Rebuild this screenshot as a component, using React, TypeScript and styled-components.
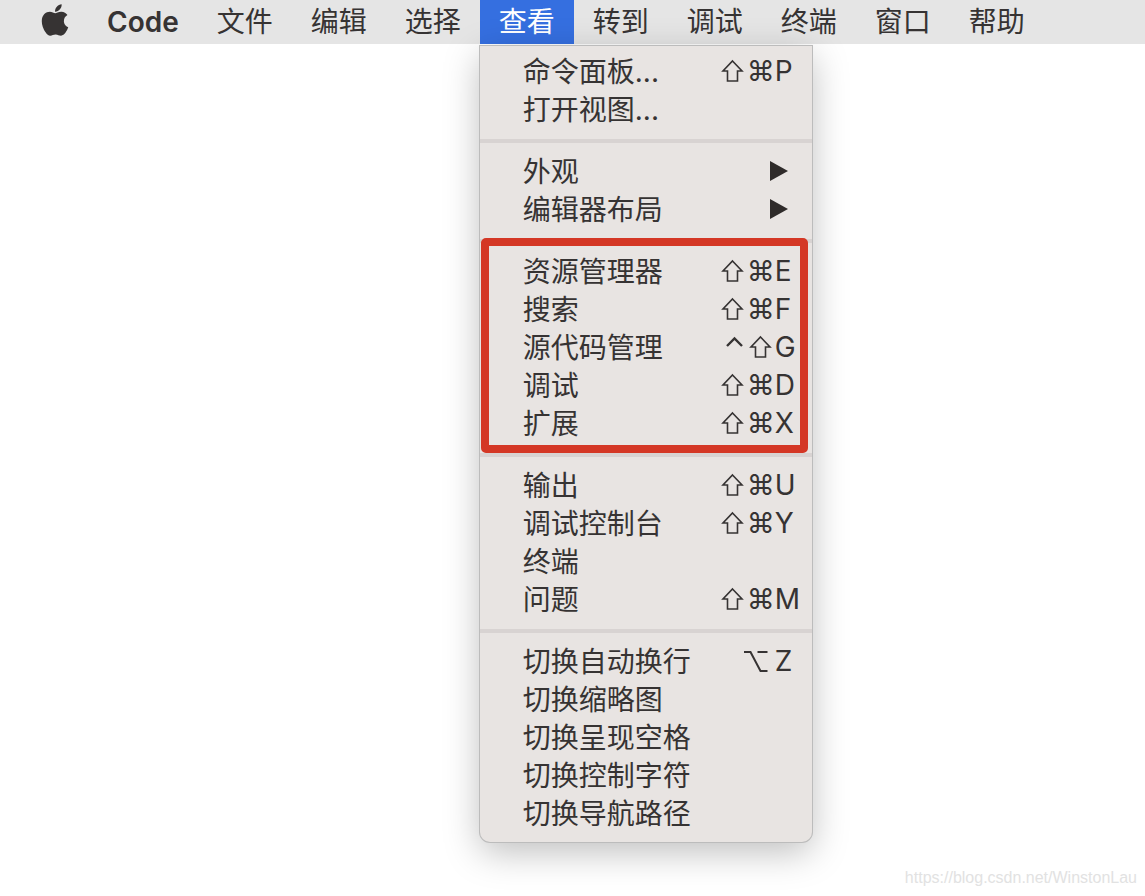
import React from 'react';
import styled, { createGlobalStyle } from 'styled-components';
import { FaApple } from 'react-icons/fa';

const GlobalStyle = createGlobalStyle`
  *, *::before, *::after { box-sizing: border-box; }
  body {
    margin: 0;
    background: #fff;
    color: #363333;
    font-family: Inter, "Noto Sans CJK SC", sans-serif;
    font-size: 28px;
  }
  button { font: inherit; color: inherit; border: 0; background: none; cursor: default; }
`;

const Page = styled.div`
  display: flex;
  flex-direction: column;
  min-height: 100vh;
`;

const MenuBar = styled.nav`
  display: flex;
  height: 44px;
  padding-left: 20px;
  background: #e5e5e5;
`;

const BarItem = styled.div`
  position: relative;
  display: flex;
`;

const BarButton = styled.button<{ $active?: boolean; $bold?: boolean }>`
  padding: 0 19px;
  line-height: 44px;
  white-space: nowrap;
  font-weight: ${p => (p.$bold ? 600 : 400)};
  color: ${p => (p.$active ? '#fff' : 'inherit')};
  background: ${p => (p.$active ? '#356fe0' : 'transparent')};
`;

const AppleButton = styled.button`
  display: flex;
  width: 68px;
  padding: 2px 0 0 2px;
  justify-content: center;
`;

const Dropdown = styled.div`
  position: absolute;
  top: 46px;
  left: 0;
  width: 332px;
  padding: 7px 0 9px;
  background: #e8e4e2;
  border-radius: 0 0 10px 10px;
  box-shadow: 0 0 0 1px #bcbcbc, 0 10px 36px rgba(0, 0, 0, 0.26);
`;

const Group = styled.div`
  position: relative;
`;

const Separator = styled.hr`
  height: 4px;
  margin: 10px 0;
  border: 0;
  background: #d8d3d2;
`;

const Row = styled.button`
  display: flex;
  width: 100%;
  height: 38px;
  padding: 0 11px 0 43px;
  align-items: center;
  justify-content: space-between;
  line-height: 38px;
  text-align: left;
  white-space: nowrap;
`;

const Keys = styled.span`
  display: flex;
  align-items: center;
  padding-bottom: 2px;
`;

const Key = styled.kbd`
  width: 28px;
  font-family: Inter, "DejaVu Sans", sans-serif;
  text-align: center;
`;

const KeyIcon = styled.svg`
  width: 28px;
  height: 28px;
  fill: none;
  stroke: currentColor;
`;

const Letter = styled(Key)<{ $spaced: boolean }>`
  width: 26px;
  margin-left: ${p => (p.$spaced ? '4px' : 0)};
  text-align: left;
`;

const Arrow = styled.svg`
  width: 18px;
  height: 20px;
  margin: 0 13px 2px 0;
  fill: #2f2b2a;
`;

const Highlight = styled.div`
  position: absolute;
  inset: -15px 4px -10px 1px;
  border: 8px solid #d43725;
  border-radius: 5px;
  pointer-events: none;
`;

const Watermark = styled.footer`
  margin-top: auto;
  padding: 0 8px 8px;
  text-align: right;
  font: 16px/20px "Liberation Sans", Arial, sans-serif;
  color: #e2e2e2;
`;

type Item = { label: string; keys?: string; submenu?: boolean };
type Section = { highlighted?: boolean; items: Item[] };

const sections: Section[] = [
  { items: [{ label: '命令面板...', keys: '⇧⌘P' }, { label: '打开视图...' }] },
  { items: [{ label: '外观', submenu: true }, { label: '编辑器布局', submenu: true }] },
  {
    highlighted: true,
    items: [
      { label: '资源管理器', keys: '⇧⌘E' },
      { label: '搜索', keys: '⇧⌘F' },
      { label: '源代码管理', keys: '⌃⇧G' },
      { label: '调试', keys: '⇧⌘D' },
      { label: '扩展', keys: '⇧⌘X' },
    ],
  },
  {
    items: [
      { label: '输出', keys: '⇧⌘U' },
      { label: '调试控制台', keys: '⇧⌘Y' },
      { label: '终端' },
      { label: '问题', keys: '⇧⌘M' },
    ],
  },
  {
    items: [
      { label: '切换自动换行', keys: '⌥Z' },
      { label: '切换缩略图' },
      { label: '切换呈现空格' },
      { label: '切换控制字符' },
      { label: '切换导航路径' },
    ],
  },
];

const barItems = ['文件', '编辑', '选择', '查看', '转到', '调试', '终端', '窗口', '帮助'];

const modifierIcons: Record<string, { name: string; path: string; weight: number }> = {
  '⇧': { name: 'Shift', path: 'M13.500 4 23 14H18.500V24H8.500V14H4Z', weight: 1.6 },
  '⌃': { name: 'Control', path: 'M8 13 15.500 5.500 23 13', weight: 2.4 },
  '⌥': { name: 'Option', path: 'M1 5H7.500L17.500 24H24.500M14.500 5H24.500', weight: 2 },
};

function Shortcut({ keys }: { keys: string }) {
  const modifiers = keys.slice(0, -1).split('');
  return (
    <Keys>
      {modifiers.map(k => {
        const icon = modifierIcons[k];
        return icon ? (
          <KeyIcon key={k} viewBox="0 0 28 28" role="img" aria-label={icon.name}>
            <path d={icon.path} strokeWidth={icon.weight} />
          </KeyIcon>
        ) : (
          <Key key={k}>{k}</Key>
        );
      })}
      <Letter $spaced={modifiers.includes('⌥')}>{keys.slice(-1)}</Letter>
    </Keys>
  );
}

function ViewMenu() {
  return (
    <Dropdown role="menu" aria-label="查看">
      {sections.map((section, i) => (
        <React.Fragment key={i}>
          {i > 0 && <Separator />}
          <Group role="group">
            {section.items.map(item => (
              <Row key={item.label} role="menuitem" type="button">
                <span>{item.label}</span>
                {item.keys && <Shortcut keys={item.keys} />}
                {item.submenu && (
                  <Arrow viewBox="0 0 18 20" aria-hidden="true"><path d="M0 0 18 10 0 20z" /></Arrow>
                )}
              </Row>
            ))}
            {section.highlighted && <Highlight />}
          </Group>
        </React.Fragment>
      ))}
    </Dropdown>
  );
}

export default function App() {
  return (
    <Page>
      <GlobalStyle />
      <MenuBar>
        <AppleButton type="button" aria-label="Apple"><FaApple size={36} /></AppleButton>
        <BarButton type="button" $bold>Code</BarButton>
        {barItems.map(label => (
          <BarItem key={label}>
            <BarButton type="button" $active={label === '查看'}>{label}</BarButton>
            {label === '查看' && <ViewMenu />}
          </BarItem>
        ))}
      </MenuBar>
      <Watermark>https://blog.csdn.net/WinstonLau</Watermark>
    </Page>
  );
}
